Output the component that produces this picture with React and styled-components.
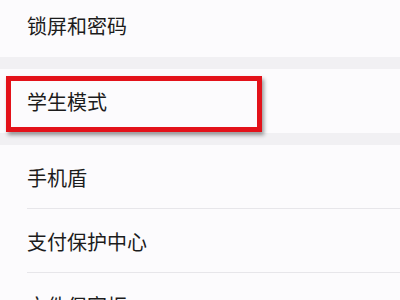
import React from 'react'
import styled, { createGlobalStyle } from 'styled-components'

const GlobalStyle = createGlobalStyle`
  body {
    margin: 0;
    background: #f1f0f3;
    font-family: "Noto Sans CJK SC", "Noto Sans", sans-serif;
  }
`

const Screen = styled.div`
  width: 400px;
  height: 300px;
  overflow: hidden;
  background: #f1f0f3;
`

const Group = styled.div`
  background: #fcfbfd;
  margin-top: ${props => props.gap}px;
`

const Row = styled.div`
  position: relative;
  height: 64px;
  display: flex;
  align-items: center;
  padding-left: 27px;
  font-size: 20px;
  color: #1c1c1c;
  &:after {
    content: '';
    display: ${props => (props.last ? 'none' : 'block')};
    position: absolute;
    left: 27px;
    right: 0;
    bottom: 0;
    height: 1px;
    background: #e7e6ea;
  }
`

const Highlight = styled.div`
  position: absolute;
  left: 6px;
  top: 7px;
  width: 256px;
  height: 56px;
  box-sizing: border-box;
  border: 5px solid #e3121a;
  box-shadow: 2px 3px 4px rgba(0, 0, 0, 0.4);
`

const App = () => (
  <Screen>
    <GlobalStyle />
    <Group gap={-7}>
      <Row last>锁屏和密码</Row>
    </Group>
    <Group gap={12}>
      <Row last>
        学生模式
        <Highlight />
      </Row>
    </Group>
    <Group gap={12}>
      <Row>手机盾</Row>
      <Row>支付保护中心</Row>
      <Row last>文件保密柜</Row>
    </Group>
  </Screen>
)

export default App
